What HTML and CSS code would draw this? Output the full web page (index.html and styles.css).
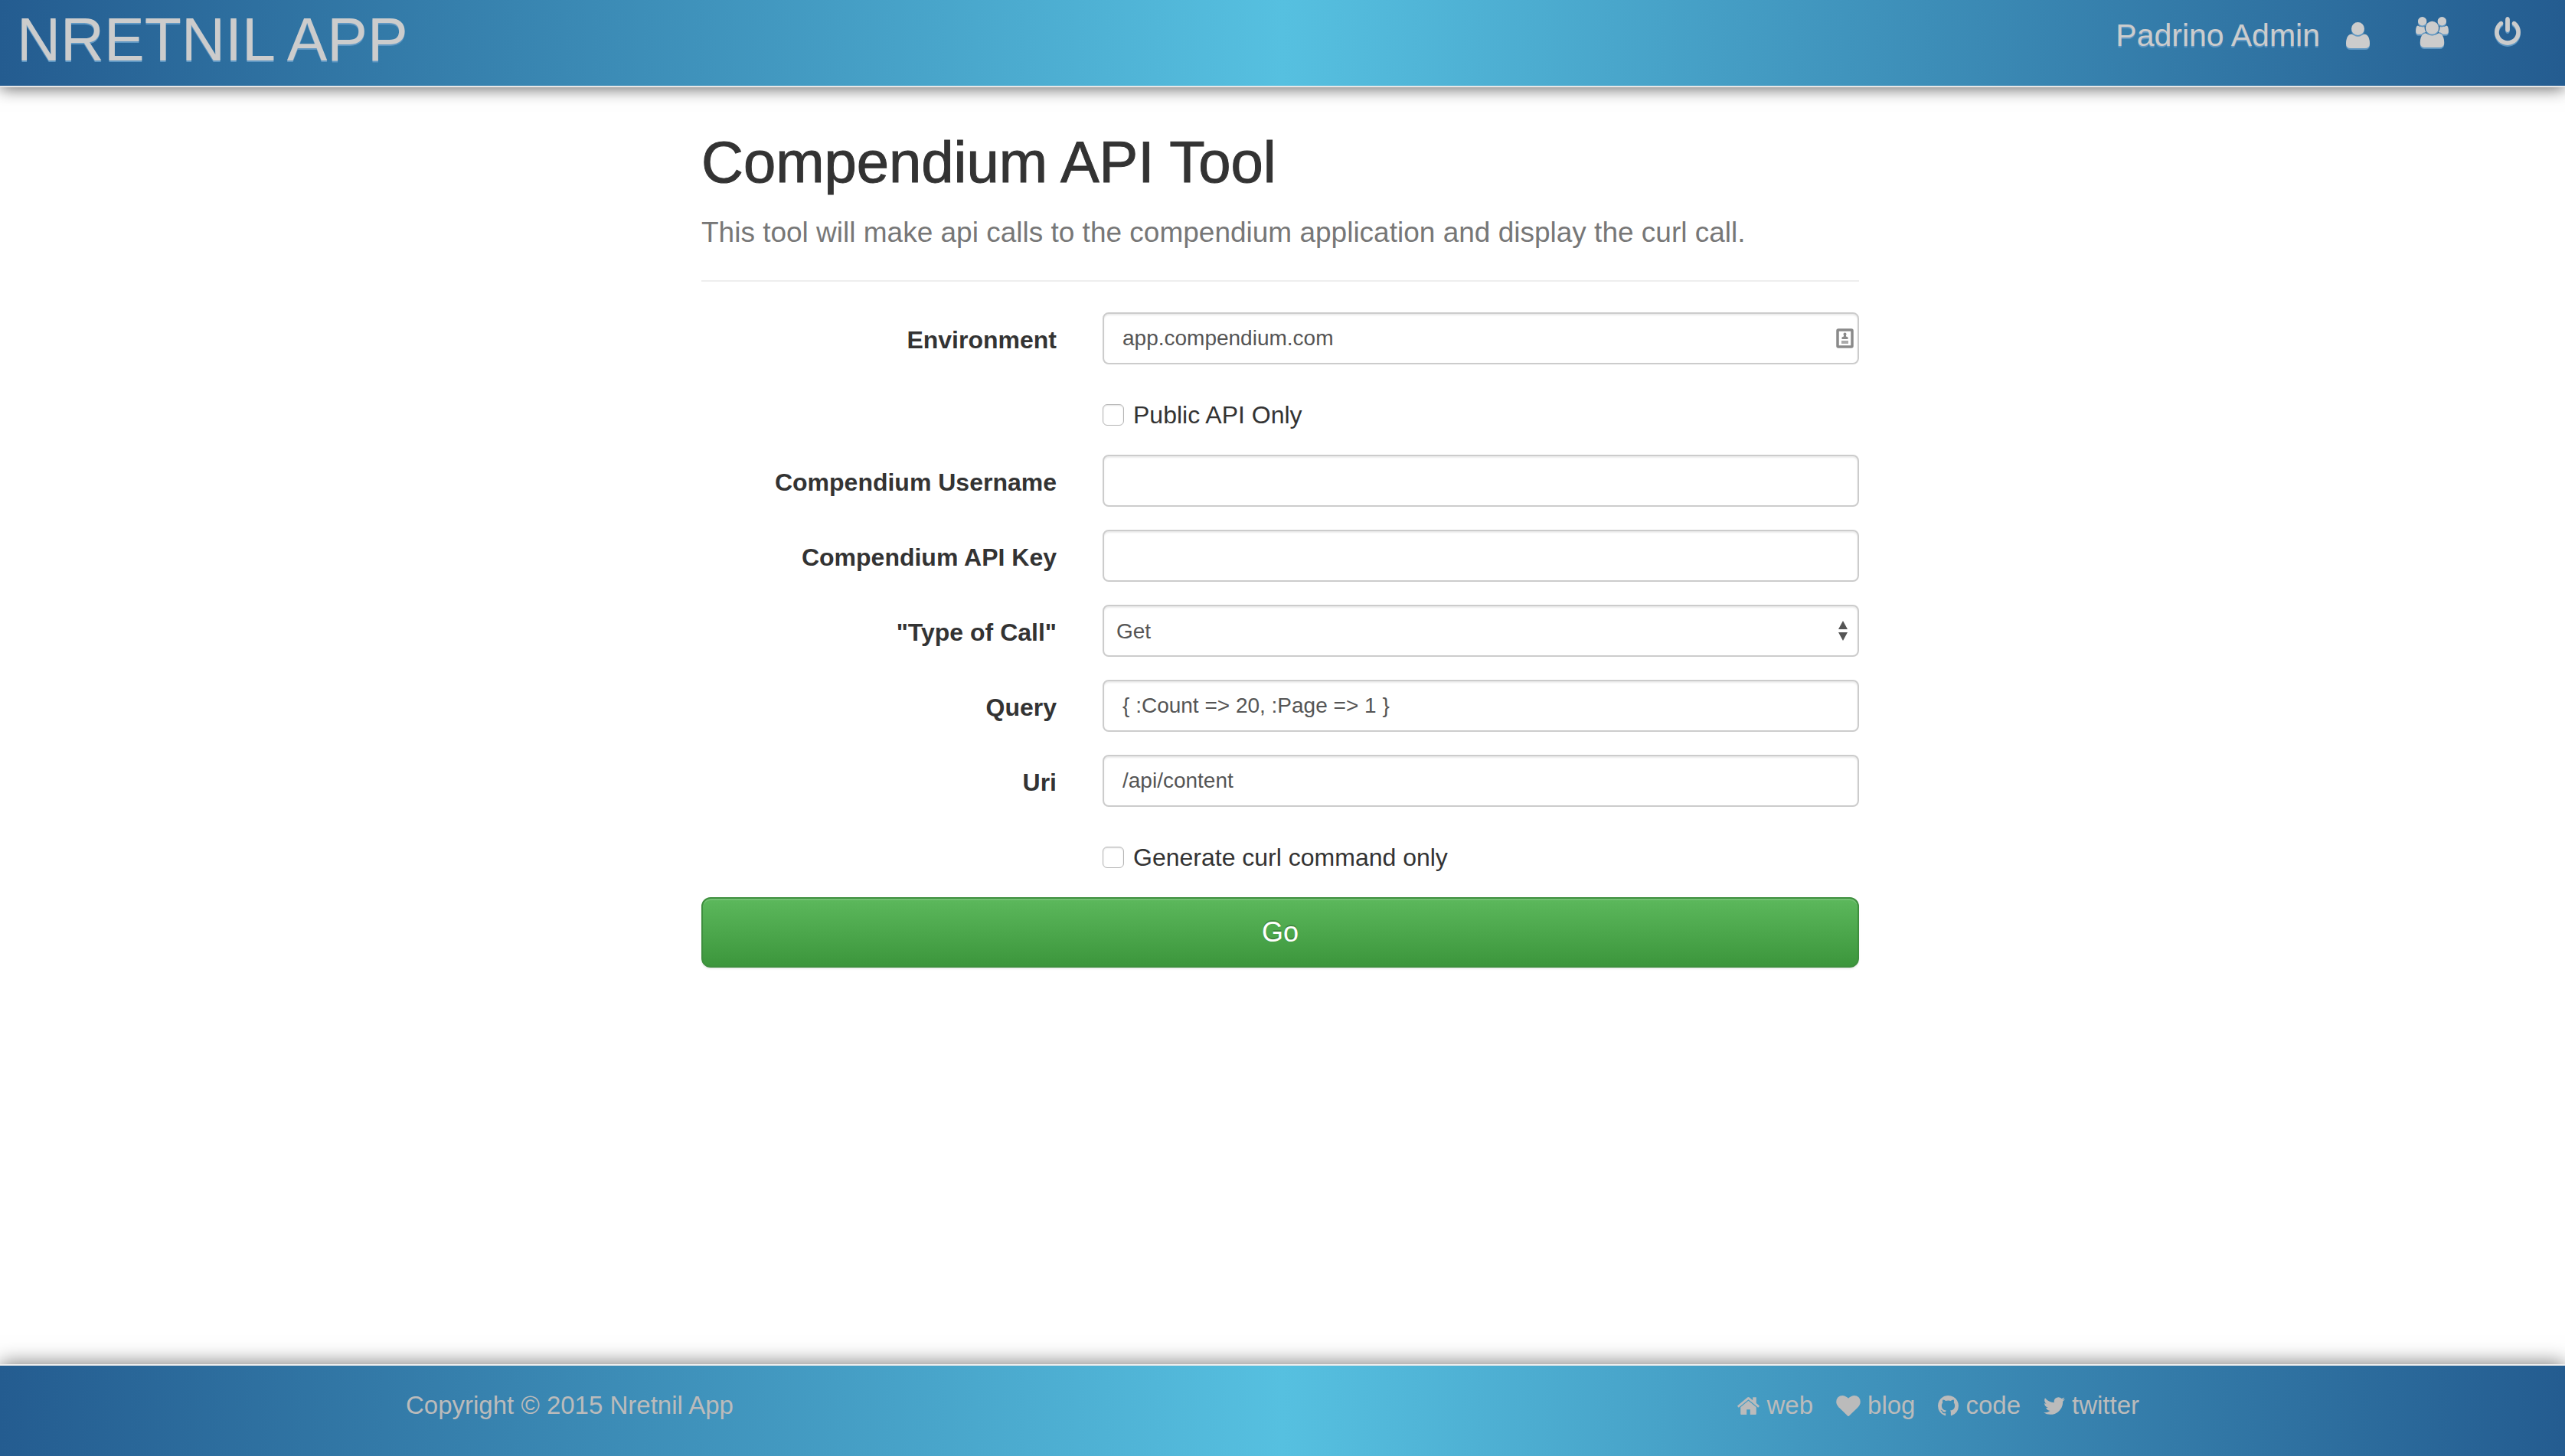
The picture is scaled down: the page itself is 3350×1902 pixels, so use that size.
FILE: index.html
```html
<!DOCTYPE html>
<html lang="en">
<head>
<meta charset="utf-8">
<meta name="viewport" content="width=device-width, initial-scale=1">
<title>Nretnil App</title>
<link rel="stylesheet" href="styles.css">
</head>
<body>
<header class="topbar">
  <a class="brand" href="#">NRETNIL APP</a>
  <nav class="topnav" aria-label="Account">
    <a class="topnav-user" href="#">Padrino Admin
      <svg class="icon-user" viewBox="192 128 1408 1536" aria-hidden="true"><path d="M1600 1405q0 120-73 189.500t-194 69.500h-874q-121 0-194-69.500t-73-189.500q0-53 3.500-103.500t14-109 26.500-108.500 43-97.500 62-81 85.500-53.500 111.500-20q9 0 42 21.500t74.500 48 108 48 133.500 21.500 133.500-21.500 108-48 74.500-48 42-21.500q61 0 111.500 20t85.500 53.500 62 81 43 97.500 26.500 108.500 14 109 3.500 103.500zm-320-893q0 159-112.500 271.500t-271.500 112.500-271.500-112.500-112.500-271.500 112.500-271.500 271.500-112.500 271.500 112.500 112.500 271.500z"/></svg>
    </a>
    <a href="#" aria-label="Accounts">
      <svg class="icon-users" viewBox="0 0 1920 1792" aria-hidden="true"><path d="M593 896q-162 5-265 128h-134q-82 0-138-40.500t-56-118.500q0-353 124-353 6 0 43.500 21t97.500 42.500 119 21.500q67 0 133-23-5 37-5 66 0 139 81 256zm1071 637q0 120-73 189.500t-194 69.500h-874q-121 0-194-69.500t-73-189.500q0-53 3.500-103.500t14-109 26.500-108.500 43-97.500 62-81 85.500-53.500 111.500-20q10 0 43 21.500t73 48 107 48 135 21.500 135-21.500 107-48 73-48 43-21.500q61 0 111.500 20t85.500 53.500 62 81 43 97.500 26.500 108.500 14 109 3.500 103.500zm-1024-1277q0 106-75 181t-181 75-181-75-75-181 75-181 181-75 181 75 75 181zm704 384q0 159-112.500 271.500t-271.500 112.500-271.500-112.500-112.500-271.500 112.500-271.500 271.500-112.500 271.500 112.500 112.500 271.500zm576 225q0 78-56 118.500t-138 40.500h-134q-103-123-265-128 81-117 81-256 0-29-5-66 66 23 133 23 59 0 119-21.500t97.500-42.500 43.500-21q124 0 124 353zm-128-609q0 106-75 181t-181 75-181-75-75-181 75-181 181-75 181 75 75 181z"/></svg>
    </a>
    <a href="#" aria-label="Log out">
      <svg class="icon-power" viewBox="128 0 1536 1664" aria-hidden="true"><path d="M1664 896q0 156-61 298t-164 245-245 164-298 61-298-61-245-164-164-245-61-298q0-182 80.500-343t226.500-270q43-32 95.500-25t83.500 50q32 42 24.500 94.500t-49.500 84.500q-98 74-151.500 181t-53.500 228q0 104 40.500 198.500t109.500 163.500 163.500 109.500 198.500 40.500 198.500-40.500 163.500-109.500 109.500-163.500 40.500-198.500q0-121-53.500-228t-151.500-181q-42-32-49.500-84.500t24.500-94.500q31-43 84-50t95 25q146 109 226.500 270t80.500 343zm-640-768v640q0 52-38 90t-90 38-90-38-38-90v-640q0-52 38-90t90-38 90 38 38 90z"/></svg>
    </a>
  </nav>
</header>

<main class="page">
  <div class="tool">
    <h1>Compendium API Tool</h1>
    <p class="lead">This tool will make api calls to the compendium application and display the curl call.</p>
    <form class="form">
      <div class="row">
        <label for="environment">Environment</label>
        <div class="field">
          <input class="control" type="text" id="environment" value="app.compendium.com">
          <svg class="icon-autofill" viewBox="0 0 23 26" aria-hidden="true"><rect x="2" y="2" width="19" height="22" rx="1" fill="none" stroke="#8a8a8a" stroke-width="3.500"/><circle cx="11.500" cy="7.500" r="2" fill="#8a8a8a"/><path fill="#8a8a8a" d="M10 8h3v2.500l2.500 1V14h-8v-2.500l2.500-1z"/><path fill="#aaa" d="M7 16h9v4H7z"/></svg>
        </div>
      </div>
      <div class="row check">
        <input type="checkbox" id="public-only"><label for="public-only">Public API Only</label>
      </div>
      <div class="row">
        <label for="username">Compendium Username</label>
        <input class="control" type="text" id="username">
      </div>
      <div class="row">
        <label for="api-key">Compendium API Key</label>
        <input class="control" type="text" id="api-key">
      </div>
      <div class="row">
        <label for="call-type">"Type of Call"</label>
        <div class="field">
          <select class="control" id="call-type">
            <option>Get</option>
            <option>Post</option>
            <option>Put</option>
            <option>Delete</option>
          </select>
          <svg class="icon-updown" viewBox="0 0 12 26" aria-hidden="true"><path d="M6 0l6 11H0zM6 26l6-11H0z"/></svg>
        </div>
      </div>
      <div class="row">
        <label for="query">Query</label>
        <input class="control" type="text" id="query" value="{ :Count =&gt; 20, :Page =&gt; 1 }">
      </div>
      <div class="row">
        <label for="uri">Uri</label>
        <input class="control" type="text" id="uri" value="/api/content">
      </div>
      <div class="row check">
        <input type="checkbox" id="curl-only"><label for="curl-only">Generate curl command only</label>
      </div>
      <button class="go" type="button">Go</button>
    </form>
  </div>
</main>

<footer class="footer">
  <div class="footer-inner">
    <span>Copyright © 2015 Nretnil App</span>
    <nav class="links" aria-label="Elsewhere">
      <a href="#"><svg class="icon-home" viewBox="89 247 1614 1289" aria-hidden="true"><path d="M1472 992v480q0 26-19 45t-45 19h-384v-384h-256v384h-384q-26 0-45-19t-19-45v-480q0-1 .5-3t.5-3l575-474 575 474q1 2 1 6zm223-69l-62 74q-8 9-21 11h-3q-13 0-21-7l-692-577-692 577q-12 8-24 7-13-2-21-11l-62-74q-8-10-7-23.500t11-21.500l719-599q32-26 76-26t76 26l244 204v-195q0-14 9-23t23-9h192q14 0 23 9t9 23v408l219 182q10 8 11 21.500t-7 23.500z"/></svg>web</a>
      <a href="#"><svg class="icon-heart" viewBox="0 128 1792 1536" aria-hidden="true"><path d="M896 1664q-26 0-44-18l-624-602q-10-8-27.500-26t-55.500-65.500-68-97.500-53.500-121-23.500-138q0-220 127-344t351-124q62 0 126.500 21.500t120 58 95.500 68.500 76 68q36-36 76-68t95.500-68.500 120-58 126.500-21.500q224 0 351 124t127 344q0 221-229 450l-623 600q-18 18-44 18z"/></svg>blog</a>
      <a href="#"><svg class="icon-github" viewBox="128 128 1536 1536" aria-hidden="true"><path d="M896 128q209 0 385.500 103t279.500 279.500 103 385.500q0 251-146.500 451.500t-378.500 277.500q-27 5-40-7t-13-30q0-3 .5-76.500t.5-134.500q0-97-52-142 57-6 102.500-18t94-39 81-66.500 53-105 20.500-150.500q0-119-79-206 37-91-8-204-28-9-81 11t-92 44l-38 24q-93-26-192-26t-192 26q-16-11-42.500-27t-83.500-38.500-85-13.500q-45 113-8 204-79 87-79 206 0 85 20.500 150t52.500 105 80.500 67 94 39 102.500 18q-39 36-49 103-21 10-45 15t-57 5-65.500-21.500-55.500-62.500q-19-32-48.500-52t-49.500-24l-20-3q-21 0-29 4.500t-5 11.500 9 14 13 12l7 5q22 10 43.500 38t31.500 51l10 23q13 38 44 61.500t67 30 69.500 7 55.500-3.500l23-4q0 38 .5 88.500t.5 54.500q0 18-13 30t-40 7q-232-77-378.500-277.500t-146.500-451.500q0-209 103-385.500t279.500-279.500 385.500-103z"/></svg>code</a>
      <a href="#"><svg class="icon-twitter" viewBox="108 256 1576 1280" aria-hidden="true"><path d="M1684 408q-67 98-162 167 1 14 1 42 0 130-38 259.500t-115.500 248.500-184.500 210.500-258 146-323 54.500q-271 0-496-145 35 4 78 4 225 0 401-138-105-2-188-64.500t-114-159.500q33 5 61 5 43 0 85-11-112-23-185.500-111.500t-73.500-205.500v-4q68 38 146 41-66-44-105-115t-39-154q0-88 44-163 121 149 294.500 238.500t371.500 99.500q-8-38-8-74 0-134 94.500-228.500t228.500-94.500q140 0 236 102 109-21 205-78-37 115-142 178 93-10 186-50z"/></svg>twitter</a>
    </nav>
  </div>
</footer>
</body>
</html>
```
FILE: styles.css
```css
* {
  box-sizing: border-box;
}

body {
  margin: 0;
  min-height: 100vh;
  display: flex;
  flex-direction: column;
  font-family: "Liberation Sans", Arial, sans-serif;
  font-size: 32px;
  color: #333;
  background: #fff;
}

a {
  color: inherit;
  text-decoration: none;
}

svg {
  display: block;
  fill: currentColor;
}

.topbar,
.footer {
  background: linear-gradient(to right, #245c90, #56c0e0 50%, #245c90);
}

/* Top bar */
.topbar {
  display: flex;
  justify-content: space-between;
  align-items: flex-start;
  height: 114px;
  padding: 0 58px 0 22px;
  background-clip: padding-box;
  border-bottom: 2px solid #e7e7e7;
  box-shadow: 0 2px 20px rgba(0, 0, 0, 0.6);
  color: #ccc;
  text-shadow: 0 2px 0 #5f97c3;
}

.brand {
  font-size: 79px;
  line-height: 104px;
}

.topnav {
  display: flex;
  align-items: flex-start;
  gap: 60px;
  padding-top: 22px;
}

.topnav svg {
  filter: drop-shadow(0 2px 0 #5f97c3);
}

.topnav-user {
  display: flex;
  align-items: center;
  gap: 34px;
  font-size: 41px;
  line-height: 48px;
}

.icon-user { width: 31px; height: 34px; }
.icon-users { width: 43px; height: 40px; }
.icon-power { width: 34px; height: 37px; }

/* Tool form */
.page {
  flex: 1;
  padding: 50px 6px 60px 0;
}

.tool {
  width: 1512px;
  max-width: 100%;
  margin: 0 auto;
}

h1 {
  margin: 0;
  font-size: 76px;
  font-weight: 400;
  line-height: 96px;
  -webkit-text-stroke: 1px #333;
}

.lead {
  margin: 20px 0 0;
  padding-bottom: 38px;
  border-bottom: 2px solid #eee;
  font-size: 37px;
  line-height: 48px;
  color: #777;
}

.form {
  display: flex;
  flex-direction: column;
  gap: 30px;
  padding-top: 40px;
}

.row {
  display: grid;
  grid-template-columns: 464px 1fr;
  column-gap: 60px;
}

.row > label {
  padding-top: 18px;
  font-weight: 700;
  line-height: 36px;
  text-align: right;
}

.field {
  display: grid;
  align-items: center;
}

.field > * {
  grid-area: 1 / 1;
}

.field svg {
  justify-self: end;
  pointer-events: none;
}

.control {
  width: 100%;
  height: 68px;
  margin: 0;
  padding: 0 24px;
  border: 2px solid #ccc;
  border-radius: 8px;
  background: #fff;
  box-shadow: inset 0 2px 2px rgba(0, 0, 0, 0.08);
  font: 28px "Liberation Sans", Arial, sans-serif;
  color: #555;
}

select.control {
  appearance: none;
  padding: 0 16px;
}

.icon-autofill {
  width: 23px;
  height: 26px;
  margin-right: 7px;
}

.icon-updown {
  width: 12px;
  height: 26px;
  margin-right: 15px;
  color: #555;
}

.check {
  display: flex;
  align-items: center;
  gap: 12px;
  height: 58px;
  padding: 14px 0 0 524px;
}

.check > label {
  padding: 0;
  font-weight: 400;
}

.check input {
  appearance: none;
  width: 28px;
  height: 28px;
  margin: 0;
  border: 1px solid #b4b4b4;
  border-radius: 6px;
  background: #fff;
  box-shadow: inset 0 1px 2px rgba(0, 0, 0, 0.12);
}

.go {
  height: 92px;
  border: 2px solid #3e8f3e;
  border-radius: 12px;
  background: linear-gradient(#5cb85c, #3c963c);
  box-shadow: inset 0 2px 0 rgba(255, 255, 255, 0.15), 0 2px 2px rgba(0, 0, 0, 0.08);
  font: 36px "Liberation Sans", Arial, sans-serif;
  color: #fff;
  text-shadow: 0 -2px 0 rgba(0, 0, 0, 0.2);
}

/* Footer */
.footer {
  height: 120px;
  padding-right: 26px;
  border-top: 2px solid #eee;
  background-clip: padding-box;
  box-shadow: 0 -2px 24px rgba(0, 0, 0, 0.5);
  color: #bbb;
}

.footer-inner {
  display: flex;
  justify-content: space-between;
  width: 2264px;
  max-width: 100%;
  margin: 0 auto;
  padding: 32px 0;
  font-size: 33px;
  line-height: 40px;
}

.links {
  display: flex;
  gap: 30px;
}

.links a {
  display: flex;
  align-items: center;
  gap: 9px;
}

.icon-home { width: 29px; height: 23px; }
.icon-heart { width: 32px; height: 27px; }
.icon-github { width: 27px; height: 27px; }
.icon-twitter { width: 28px; height: 23px; }
```
